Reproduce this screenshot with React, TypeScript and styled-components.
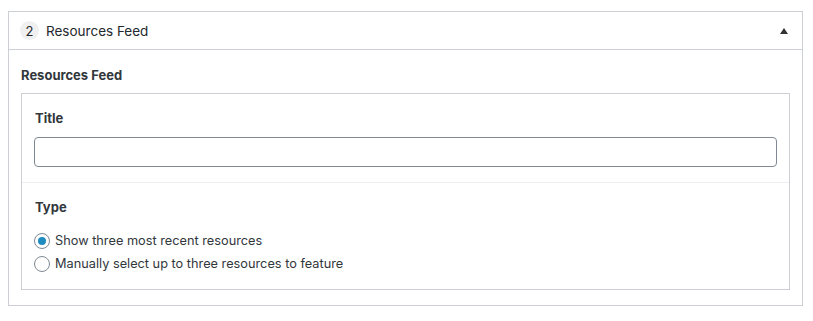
import React from "react";
import styled, { createGlobalStyle } from "styled-components";

const Global = createGlobalStyle`
  html, body { margin: 0; padding: 0; background: #fff; }
  body { font-family: Inter, "Liberation Sans", Arial, sans-serif; color: #1e1e1e; }
  * { box-sizing: border-box; }
`;

const Page = styled.div`
  padding: 11px 10px 0 8px;
`;

const Panel = styled.section`
  border: 1px solid #ccd0d4;
  background: #fff;
`;

const Header = styled.div`
  height: 38px;
  display: flex;
  align-items: center;
  padding: 0 12px 0 11px;
  border-bottom: 1px solid #ccd0d4;
`;

const Badge = styled.span`
  width: 19px;
  height: 19px;
  border-radius: 50%;
  background: #f0f0f0;
  display: flex;
  align-items: center;
  justify-content: center;
  font-size: 13px;
  color: #23282d;
  margin-right: 7px;
`;

const HeaderTitle = styled.span`
  font-size: 13.5px;
  color: #23282d;
  flex: 1;
`;

const Arrow = styled.span`
  width: 0;
  height: 0;
  border-left: 4px solid transparent;
  border-right: 4px solid transparent;
  border-bottom: 6px solid #333;
  margin-right: 2px;
`;

const Body = styled.div`
  padding: 17px 12px 15px 12px;
`;

const SectionTitle = styled.div`
  font-size: 13px;
  font-weight: 700;
  color: #32373c;
  line-height: 16px;
  margin-bottom: 10px;
`;

const Fields = styled.div`
  border: 1px solid #ccd0d4;
`;

const Field = styled.div<{ $divider?: boolean }>`
  padding: 16px 12px ${(p) => (p.$divider ? "17px" : "15px")} 12px;
  border-top: ${(p) => (p.$divider ? "1px solid #eee" : "none")};
`;

const Label = styled.div`
  font-size: 13px;
  font-weight: 700;
  color: #32373c;
  line-height: 16px;
  margin: 0 0 11px 1px;
`;

const Input = styled.input`
  display: block;
  width: 100%;
  height: 30px;
  border: 1px solid #7e8993;
  border-radius: 4px;
  padding: 0 8px;
  font-size: 14px;
  background: #fff;
  outline: none;
`;

const Options = styled.div`
  display: flex;
  flex-direction: column;
  gap: 7px;
  padding-top: 7px;
`;

const Option = styled.label`
  display: flex;
  align-items: center;
  font-size: 12.75px;
  color: #32373c;
  line-height: 16px;
`;

const Radio = styled.span<{ $checked?: boolean }>`
  width: 16px;
  height: 16px;
  border-radius: 50%;
  border: 1px solid #7e8993;
  background: #fff;
  margin-right: 5px;
  display: flex;
  align-items: center;
  justify-content: center;
  &::after {
    content: "";
    width: 8px;
    height: 8px;
    border-radius: 50%;
    background: ${(p) => (p.$checked ? "#1e8cbe" : "transparent")};
  }
`;

export default function App() {
  return (
    <>
      <Global />
      <Page>
        <Panel>
          <Header>
            <Badge>2</Badge>
            <HeaderTitle>Resources Feed</HeaderTitle>
            <Arrow />
          </Header>
          <Body>
            <SectionTitle>Resources Feed</SectionTitle>
            <Fields>
              <Field>
                <Label>Title</Label>
                <Input type="text" />
              </Field>
              <Field $divider>
                <Label>Type</Label>
                <Options>
                  <Option>
                    <Radio $checked />
                    Show three most recent resources
                  </Option>
                  <Option>
                    <Radio />
                    Manually select up to three resources to feature
                  </Option>
                </Options>
              </Field>
            </Fields>
          </Body>
        </Panel>
      </Page>
    </>
  );
}
